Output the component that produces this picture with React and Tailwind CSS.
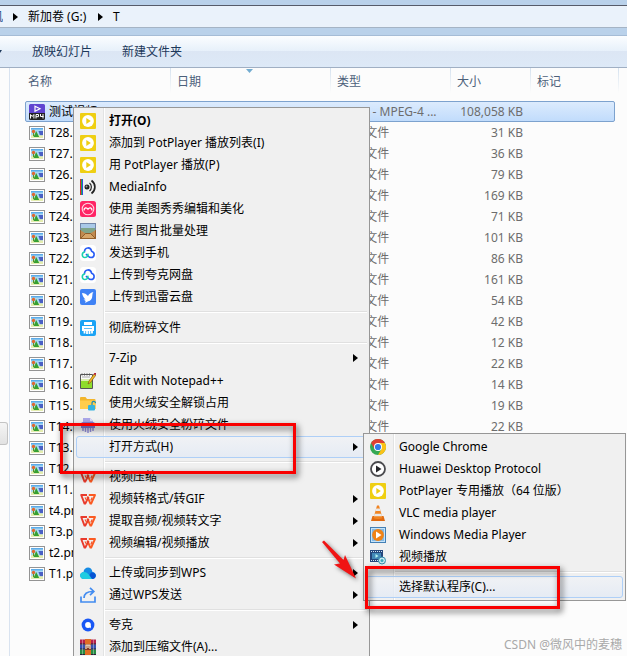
import clsx from 'clsx';

const files = [
  { name: 'T28.png', size: '31 KB' },
  { name: 'T27.png', size: '36 KB' },
  { name: 'T26.png', size: '79 KB' },
  { name: 'T25.png', size: '169 KB' },
  { name: 'T24.png', size: '71 KB' },
  { name: 'T23.png', size: '101 KB' },
  { name: 'T22.png', size: '86 KB' },
  { name: 'T21.png', size: '161 KB' },
  { name: 'T20.png', size: '54 KB' },
  { name: 'T19.png', size: '42 KB' },
  { name: 'T18.png', size: '12 KB' },
  { name: 'T17.png', size: '22 KB' },
  { name: 'T16.png', size: '14 KB' },
  { name: 'T15.png', size: '19 KB' },
  { name: 'T14.png', size: '22 KB' },
  { name: 'T13.png' },
  { name: 'T12.png' },
  { name: 'T11.png' },
  { name: 't4.png' },
  { name: 'T3.png' },
  { name: 't2.png' },
  { name: 'T1.png' },
];

function Svg({ children }) {
  return (
    <svg viewBox="0 0 16 16" className="size-4 shrink-0" aria-hidden="true">
      {children}
    </svg>
  );
}

function ImageFileIcon() {
  return (
    <Svg>
      <rect x="0.5" y="1.5" width="15" height="13" fill="#fff" stroke="#949494" />
      <rect x="2" y="3" width="12" height="10" fill="#a9d8f5" />
      <rect x="2" y="3" width="12" height="1.500" fill="#5cabe8" />
      <path d="M9.500 6H14v4l-3 .5z" fill="#4a60c4" />
      <path d="M2 13v-2.500l4-2 3 1.500 5 .5V13z" fill="#e4edb0" />
      <path d="M4.500 12 7.200 6l3 6z" fill="#36a034" />
      <circle cx="4.500" cy="6.500" r="1.700" fill="#e0682f" />
      <path d="M4 8h1v3H4z" fill="#5b8d2a" />
    </Svg>
  );
}

function Mp4Icon() {
  return (
    <Svg>
      <path d="M0 1.500A1.500 1.500 0 0 1 1.500 0h13A1.500 1.500 0 0 1 16 1.500V9H0z" fill="#6044d0" />
      <path d="M0 9h16v5.500a1.500 1.500 0 0 1-1.500 1.500h-13A1.500 1.500 0 0 1 0 14.500z" fill="#222" />
      <path d="M6 2.200 11 4.800 6 7.300z" fill="none" stroke="#fff" strokeWidth="1.200" />
      <path d="M1.500 14.500v-4l1.700 2 1.700-2v4M7 14.500v-4h2.500v2.200H7M11.500 10v2.500h3M14 10v4.500" fill="none" stroke="#fff" />
    </Svg>
  );
}

function PotPlayerIcon() {
  return (
    <Svg>
      <rect width="16" height="16" rx="1" fill="#efcf12" />
      <circle cx="8" cy="8" r="5.900" fill="#fff" />
      <path d="M6.300 5v6l4.500-3z" fill="#efcf12" />
    </Svg>
  );
}

function MediaInfoIcon() {
  return (
    <Svg>
      <path d="M0 0h1v16H0z" fill="#e8202a" />
      <path d="M1 0h1v16H1z" fill="#28a050" />
      <path d="M2 0h1v16H2z" fill="#2850e0" />
      <circle cx="7" cy="8" r="2.500" fill="#222" />
      <circle cx="6.500" cy="7.500" r="1" fill="#999" />
      <path d="M9.500 4c2.500 2 2.500 6 0 8" fill="none" stroke="#222" strokeWidth="1.200" />
      <path d="M11.500 1.500c4.500 3.500 4.500 9.500 0 13" fill="none" stroke="#222" strokeWidth="1.700" />
    </Svg>
  );
}

function MeituIcon() {
  return (
    <Svg>
      <rect width="16" height="16" rx="2.500" fill="#ff2465" />
      <circle cx="8" cy="8" r="5.800" fill="none" stroke="#ffd5e1" strokeWidth="1.100" />
      <path d="M4 9.500c0-3 2.500-3.500 4-1.300 1.500-2.200 4-1.700 4 1.300" fill="none" stroke="#fff" strokeWidth="1.300" />
    </Svg>
  );
}

function BatchImageIcon() {
  return (
    <Svg>
      <rect x="0.500" y="0.500" width="15" height="11" fill="#a9c9e8" stroke="#7386a8" />
      <path d="M1 5h14v6H1z" fill="#7fa58a" />
      <path d="M0 7 5 10h6l5-3V16H0z" fill="#c08a50" />
      <path d="m.5 15.500 5-5h5l5 5z" fill="#d7a669" stroke="#7e4e20" strokeWidth="0.800" />
      <path d="M.5 7v8.500h15V7" fill="none" stroke="#95602b" />
    </Svg>
  );
}

function CloudDriveIcon() {
  return (
    <Svg>
      <rect width="16" height="16" rx="3.500" fill="#fff" />
      <path d="M4.500 7.300C4.300 1.800 10.700 1.500 11.600 6.200c3.700 1.300 3.200 6.300-.6 6.300-2.500 0-3.500-2-5-3.500" fill="none" stroke="#285cf5" strokeWidth="1.600" />
      <path d="M5 6.800C1.500 7.200 1.300 12.500 5 12.500c2.500 0 3.700-2.300 2.500-3.800" fill="none" stroke="#1ad0ae" strokeWidth="1.600" />
    </Svg>
  );
}

function XunleiIcon() {
  return (
    <Svg>
      <rect width="16" height="16" rx="2" fill="#3f82f5" />
      <path d="M2 4c2.500.2 4.300 1 6 3 1-2 2.800-3.500 5.500-4-1 1-1 2-1.200 4 0 3-1.800 4.700-4 5.300L5 14c.6-1 .8-1.800.3-2.300L3.500 10.500l2 0C3.800 8.800 2.500 6.800 2 4z" fill="#fff" />
    </Svg>
  );
}

function ShredderIcon() {
  return (
    <Svg>
      <rect width="16" height="16" rx="2" fill="#1aa3f5" />
      <path d="M4 2h8v3H4zM2 6h12v5H2z" fill="#fff" />
      <path d="M4 8.500h8" stroke="#1aa3f5" strokeWidth="0.700" />
      <path d="M4.500 11v2.500M7 11v3M9.500 11v3M12 11v2.500" stroke="#fff" strokeWidth="1.800" />
    </Svg>
  );
}

function NotepadIcon() {
  return (
    <Svg>
      <path d="M.5 1.500h12v14H.5z" fill="#fafafa" stroke="#555" />
      <path d="M1 8h11v7H1z" fill="#8fdc2b" />
      <path d="M1 6h11v2H1z" fill="#dcefae" />
      <path d="M2 4h8" stroke="#aaa" />
      <path d="M2 .5v2M4.500.5v2M7 .5v2M9.500.5v2" stroke="#555" />
      <path d="m8 11 1-3 5-7 2 1-5.500 7.500z" fill="#f4b824" stroke="#704b14" strokeWidth="0.600" />
      <path d="m13.500 1.500.8-1.500H16v1.800z" fill="#b51d38" />
    </Svg>
  );
}

function UnlockFolderIcon() {
  return (
    <Svg>
      <path d="M0 3a1 1 0 0 1 1-1h4.500L7 4h7.500a1 1 0 0 1 1 1v9H1a1 1 0 0 1-1-1z" fill="#f2b52c" />
      <path d="M0 5.500h15.500V14H1a1 1 0 0 1-1-1z" fill="#ffcd4c" />
      <path d="M12 10V8.200c0-2.500 3.500-2.500 3.500 0" fill="none" stroke="#188dbd" strokeWidth="1.200" />
      <rect x="8" y="10" width="7" height="5.500" rx="1" fill="#36b3df" />
    </Svg>
  );
}

function FileShredIcon() {
  return (
    <Svg>
      <path d="M3 1h7l3 3v4H3z" fill="#aaa6e8" />
      <path d="M10 1v3h3z" fill="#dddbfa" />
      <path d="M1 7c0-1 .5-2 2-2h10c1.500 0 2 1 2 2v4H1z" fill="#837ed0" />
      <path d="M3 11v3M5.500 11v4M8 11v5M10.500 11v4M13 11v3" stroke="#918cd8" strokeWidth="1.500" />
    </Svg>
  );
}

function WpsIcon() {
  return (
    <Svg>
      <path d="M8.800 4H15l-3.800 8.600h-.8L7.300 5.500" fill="none" stroke="#fb5a22" strokeWidth="1.900" strokeLinejoin="round" />
      <path d="M7 4H1.200l3.300 8.600h.8L8.600 6" fill="none" stroke="#e93a2c" strokeWidth="1.900" strokeLinejoin="round" />
      <path d="M5 6.500 7 10M12.200 6.500l-1.400 3" stroke="#f4552c" strokeWidth="1.300" />
    </Svg>
  );
}

function WpsCloudIcon() {
  return (
    <Svg>
      <path d="M4 14C-1 14-1 7.500 3.500 7c.5-5.500 8-6.500 9 0 4.500.3 4.500 7-.5 7z" fill="#158be5" />
      <path d="M11 7.500c6-1 6.500 6.500 1 6.500H7z" fill="#0754d3" />
      <path d="M4 14C-1 14-1 7.500 3.500 7c4-.3 5.500 3 8.500 7z" fill="#20cce1" />
    </Svg>
  );
}

function ShareIcon() {
  return (
    <Svg>
      <path d="M1 9.500V15h14V9.500M4 11c0-4.500 3-6.500 9-6.500M10 .8 13.800 4.500 10 8.200" fill="none" stroke="#438cf0" strokeWidth="1.700" />
    </Svg>
  );
}

function QuarkIcon() {
  return (
    <Svg>
      <circle cx="8" cy="8" r="6.400" fill="#1957f5" />
      <circle cx="8" cy="8" r="2.900" fill="#fff" />
      <path d="m8.500 9 2.500 0-.5 2.500z" fill="#fff" />
    </Svg>
  );
}

function WinRarIcon() {
  return (
    <Svg>
      <rect y="0.500" width="16" height="5" fill="#b5204a" />
      <rect y="5.500" width="16" height="5" fill="#3852b0" />
      <rect y="10.500" width="16" height="5" fill="#278b43" />
      <path d="M0 5h16M0 10h16M0 15.500h16" stroke="#272338" />
      <path d="M2.500.5v15M13.500.5v15" stroke="#fff" strokeOpacity="0.350" />
      <rect x="5" y="0" width="6" height="16" fill="#e16d24" />
      <rect x="5" y="5" width="6" height="6" fill="#873620" />
      <path d="M6 10V6h4v4M8 6v3" fill="none" stroke="#f7edd2" strokeWidth="1.200" />
    </Svg>
  );
}

function ChromeIcon() {
  return (
    <Svg>
      <circle cx="8" cy="8" r="8" fill="#34a853" />
      <path d="M1.070 4A8 8 0 0 1 14.930 4H8L4.500 10z" fill="#df3f32" />
      <path d="M14.930 4A8 8 0 0 1 8 16l3.500-6L8 4z" fill="#fbc116" />
      <circle cx="8" cy="8" r="4" fill="#fff" />
      <circle cx="8" cy="8" r="3.100" fill="#3279e9" />
    </Svg>
  );
}

function HuaweiIcon() {
  return (
    <Svg>
      <circle cx="8" cy="8" r="7" fill="#fff" stroke="#4a4a4e" strokeWidth="1.800" />
      <path d="M6 4.500v7l5.500-3.500z" fill="#26262a" />
    </Svg>
  );
}

function VlcIcon() {
  return (
    <Svg>
      <path d="M2.500 11h11l1.500 5H1z" fill="#e06a10" />
      <path d="M7 .5h2L12.500 13c-2 1.300-7 1.300-9 0z" fill="#f18422" />
      <path d="M6.200 3.500h3.600l.8 2.500H5.400z" fill="#e9e9e9" />
      <path d="M4.600 8.800h6.800l.7 2.400H3.900z" fill="#e9e9e9" />
    </Svg>
  );
}

function MediaPlayerIcon() {
  return (
    <Svg>
      <rect x="0.500" y="0.500" width="15" height="15" fill="#85bae6" stroke="#4580b5" />
      <rect x="1.500" y="1.500" width="13" height="13" fill="none" stroke="#c5e4fa" />
      <circle cx="8" cy="8" r="5.900" fill="#f18316" />
      <path d="M6 4.500v7L11.500 8z" fill="#fff" />
    </Svg>
  );
}

function VideoIcon() {
  return (
    <Svg>
      <path d="M0 1h13v12H0z" fill="#25477d" />
      <path d="M2 4h9v6H2z" fill="#4288b8" />
      <path d="M1 2.500h12M1 11.500h10" stroke="#d2e4f3" strokeDasharray="1 1" />
      <path d="m5.500 5 3 2-3 2z" fill="#b2f1ef" />
      <circle cx="12" cy="11.500" r="3.500" fill="#c5e9f0" stroke="#338eab" />
      <circle cx="12" cy="11.500" r="1.500" fill="#39aabd" />
    </Svg>
  );
}

function ArrowRight() {
  return (
    <svg viewBox="0 0 5 8" className="h-2 w-[5px] shrink-0 fill-black" aria-hidden="true">
      <path d="M0 0v8l5-4z" />
    </svg>
  );
}

const menu = [
  { label: '打开(O)', icon: PotPlayerIcon, bold: true },
  { label: '添加到 PotPlayer 播放列表(I)', icon: PotPlayerIcon },
  { label: '用 PotPlayer 播放(P)', icon: PotPlayerIcon },
  { label: 'MediaInfo', icon: MediaInfoIcon },
  { label: '使用 美图秀秀编辑和美化', icon: MeituIcon },
  { label: '进行 图片批量处理', icon: BatchImageIcon },
  { label: '发送到手机', icon: CloudDriveIcon },
  { label: '上传到夸克网盘', icon: CloudDriveIcon },
  { label: '上传到迅雷云盘', icon: XunleiIcon },
  null,
  { label: '彻底粉碎文件', icon: ShredderIcon, tall: true },
  null,
  { label: '7-Zip', sub: true },
  { label: 'Edit with Notepad++', icon: NotepadIcon, tall: true },
  { label: '使用火绒安全解锁占用', icon: UnlockFolderIcon },
  { label: '使用火绒安全粉碎文件', icon: FileShredIcon },
  { label: '打开方式(H)', sub: true, active: true },
  null,
  { label: '视频压缩', icon: WpsIcon },
  { label: '视频转格式/转GIF', icon: WpsIcon, sub: true },
  { label: '提取音频/视频转文字', icon: WpsIcon, sub: true },
  { label: '视频编辑/视频播放', icon: WpsIcon, sub: true },
  null,
  { label: '上传或同步到WPS', icon: WpsCloudIcon, sub: true },
  { label: '通过WPS发送', icon: ShareIcon, sub: true },
  null,
  { label: '夸克', icon: QuarkIcon, sub: true },
  { label: '添加到压缩文件(A)...', icon: WinRarIcon },
];

const openWith = [
  { label: 'Google Chrome', icon: ChromeIcon },
  { label: 'Huawei Desktop Protocol', icon: HuaweiIcon },
  { label: 'PotPlayer 专用播放（64 位版）', icon: PotPlayerIcon },
  { label: 'VLC media player', icon: VlcIcon },
  { label: 'Windows Media Player', icon: MediaPlayerIcon },
  { label: '视频播放', icon: VideoIcon },
  null,
  { label: '选择默认程序(C)...', active: true },
];

function ContextMenu({ items, className }) {
  return (
    <div
      role="menu"
      className={clsx(
        'absolute flex flex-col border border-[#979797] bg-[linear-gradient(to_right,#f1f1f1_29px,#e2e3e3_29px,#e2e3e3_30px,#fff_30px,#fff_31px,#f0f0f0_31px)] p-[2px] text-black',
        className
      )}
    >
      {items.map((item, i) =>
        item ? (
          <button
            key={i}
            role="menuitem"
            className={clsx(
              'flex shrink-0 items-center gap-[13px] rounded-[3px] border pr-2 pl-[3px] text-left whitespace-pre',
              item.tall ? 'h-[23px]' : 'h-[22px]',
              item.active ? 'border-[#aecff7] bg-linear-to-b from-[#f0f3f8]/60 to-[#e3eaf5]/80' : 'border-transparent',
              item.bold && 'font-bold'
            )}
          >
            {item.icon ? <item.icon /> : <span className="size-4 shrink-0" />}
            <span className="flex-1">{item.label}</span>
            {item.sub && <ArrowRight />}
          </button>
        ) : (
          <div key={i} role="separator" className="flex h-2 shrink-0 flex-col justify-center pl-[29px]">
            <div className="h-[2px] border-t border-[#e0e0e0] bg-white" />
          </div>
        )
      )}
    </div>
  );
}

function HeaderCell({ children, first, sorted }) {
  return (
    <th
      className={clsx(
        'relative flex h-[25px] items-center pt-[2px] font-normal',
        first ? 'pl-[3px]' : 'pl-[6px]'
      )}
    >
      {children}
      {sorted && (
        <svg viewBox="0 0 7 4" className="absolute top-px left-[75px] h-1 w-[7px]" aria-hidden="true">
          <path d="M0 0h7L3.500 4z" fill="#73acd0" />
        </svg>
      )}
      <span className="absolute top-0 right-0 h-full w-px bg-linear-to-b from-[#d5e2ef] to-[#fcfcfc]" />
    </th>
  );
}

const columns = 'grid grid-cols-[146px_160px_120px_80px_88px]';

function FileRow({ icon, name, type, size, selected }) {
  return (
    <tr
      className={clsx(
        columns,
        'h-[21px] w-[590px] items-center rounded-[2px] border whitespace-nowrap',
        selected ? 'border-[#7da2ce] bg-linear-to-b from-[#dcebfd] to-[#c1dcfc]' : 'border-transparent'
      )}
    >
      <td className="flex items-center gap-1 pl-[3px] text-black">
        {icon}
        {name}
      </td>
      <td />
      <td className="pl-[5px]">{type}</td>
      <td className="pr-[9px] text-right">{size}</td>
      <td />
    </tr>
  );
}

export default function App() {
  return (
    <div className="relative flex h-screen flex-col overflow-hidden bg-[#fcfcfc] font-['Noto_Sans','Noto_Sans_CJK_SC',sans-serif] text-[12px] leading-4">
      {/* address bar */}
      <div className="bg-[#b9d1ea] pt-[5px] pb-[7px]">
        <nav className="flex h-[23px] items-center border-t border-b border-t-[#565b69] border-b-[#a5b4c5] bg-[#eaf2fb] text-black">
          <span className="flex w-[3px] justify-end overflow-hidden text-[#1e4e8c]">
            <span>机</span>
          </span>
          <span className="flex w-[25px] justify-center">
            <ArrowRight />
          </span>
          <a href="#g" className="w-[60px] whitespace-nowrap">新加卷 (G:)</a>
          <span className="flex w-[25px] justify-center">
            <ArrowRight />
          </span>
          <a href="#t">T</a>
        </nav>
      </div>

      {/* toolbar */}
      <div className="flex h-[33px] shrink-0 items-center gap-[30px] border-t border-b border-t-[#a5bcd6] border-b-[#a0afc3] bg-[linear-gradient(#fbfdff,#e6f0fa_50%,#dce6f4_50%,#dde9f7)] text-[#1e395b]">
        <svg viewBox="0 0 2 3" className="h-[3px] w-[2px]" aria-hidden="true">
          <path d="M0 0h2L0 3z" fill="#1e395b" />
        </svg>
        <button>放映幻灯片</button>
        <button>新建文件夹</button>
      </div>

      <div className="flex min-h-0 flex-1">
        <aside className="w-[10px] shrink-0 border-r border-[#d9e3f0] pt-[354px]">
          <div className="h-[23px] w-2 rounded-r-[3px] border border-l-0 border-[#c3c3c3] bg-linear-to-b from-[#f5f5f5] to-[#e2e2e2]" />
        </aside>

        <table className="block flex-1 pl-[15px] text-[#6d6d6d]">
          <thead className="block pb-2 text-[#4c607a]">
            <tr className={columns}>
              <HeaderCell first>名称</HeaderCell>
              <HeaderCell sorted>日期</HeaderCell>
              <HeaderCell>类型</HeaderCell>
              <HeaderCell>大小</HeaderCell>
              <HeaderCell>标记</HeaderCell>
            </tr>
          </thead>
          <tbody className="block">
            <FileRow icon={<Mp4Icon />} name="测试视频" type="KMP4 - MPEG-4 ..." size="108,058 KB" selected />
            {files.map((file) => (
              <FileRow key={file.name} icon={<ImageFileIcon />} name={file.name} type="PNG 文件" size={file.size} />
            ))}
          </tbody>
        </table>
      </div>

      <ContextMenu items={menu} className="top-[107px] left-[73px] w-[297px]" />
      <ContextMenu items={openWith} className="top-[433px] left-[363px] w-[263px]" />

      {/* annotations */}
      <div className="absolute top-[423px] left-[60px] h-[51px] w-[236px] border-3 border-[#f90000] drop-shadow-[2px_3px_3px_rgba(0,0,0,0.65)]" />
      <div className="absolute top-[566px] left-[365px] h-[43px] w-[195px] border-3 border-[#f90000] drop-shadow-[2px_3px_3px_rgba(0,0,0,0.65)]" />
      <svg
        viewBox="0 0 36 40"
        className="absolute top-[540px] left-[321px] h-10 w-9 drop-shadow-[2px_2px_2px_rgba(0,0,0,0.5)]"
        aria-hidden="true"
      >
        <path d="M1 2 3 .5 22.500 20l1.500-5 11 23.500-22-14 6-1z" fill="#f01414" />
      </svg>
      <p className="absolute right-[5px] bottom-[3px] text-[#a9a9a9]">CSDN @微风中的麦穗</p>
    </div>
  );
}
